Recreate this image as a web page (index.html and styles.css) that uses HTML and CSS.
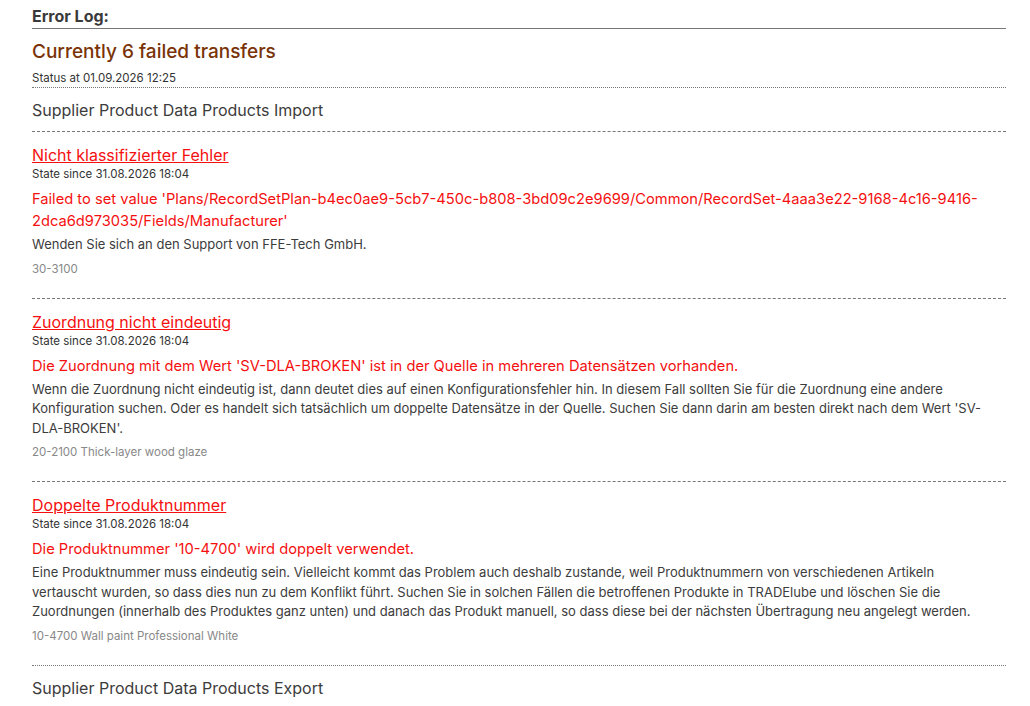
FILE: index.html
```html
<!DOCTYPE html>
<html lang="de">
<head>
<meta charset="utf-8">
<title>Error Log</title>
<link rel="stylesheet" href="styles.css">
</head>
<body>
<div class="page">
  <h2 class="log-head">Error Log:</h2>
  <div class="summary">
    <h1 class="count">Currently 6 failed transfers</h1>
    <div class="status">Status at 01.09.2026 12:25</div>
  </div>
  <section class="group">
    <h3 class="group-title">Supplier Product Data Products Import</h3>
    <div class="entry">
      <a class="err-title" href="#">Nicht klassifizierter Fehler</a>
      <div class="since">State since 31.08.2026 18:04</div>
      <div class="msg">Failed to set value 'Plans/RecordSetPlan-b4ec0ae9-5cb7-450c-b808-3bd09c2e9699/Common/RecordSet-4aaa3e22-9168-4c16-9416-2dca6d973035/Fields/Manufacturer'</div>
      <div class="desc">Wenden Sie sich an den Support von FFE-Tech GmbH.</div>
      <div class="code">30-3100</div>
    </div>
    <div class="entry">
      <a class="err-title" href="#">Zuordnung nicht eindeutig</a>
      <div class="since">State since 31.08.2026 18:04</div>
      <div class="msg">Die Zuordnung mit dem Wert 'SV-DLA-BROKEN' ist in der Quelle in mehreren Datensätzen vorhanden.</div>
      <div class="desc">Wenn die Zuordnung nicht eindeutig ist, dann deutet dies auf einen Konfigurationsfehler hin. In diesem Fall sollten Sie für die Zuordnung eine andere Konfiguration suchen. Oder es handelt sich tatsächlich um doppelte Datensätze in der Quelle. Suchen Sie dann darin am besten direkt nach dem Wert 'SV-DLA-BROKEN'.</div>
      <div class="code">20-2100 Thick-layer wood glaze</div>
    </div>
    <div class="entry last">
      <a class="err-title" href="#">Doppelte Produktnummer</a>
      <div class="since">State since 31.08.2026 18:04</div>
      <div class="msg">Die Produktnummer '10-4700' wird doppelt verwendet.</div>
      <div class="desc">Eine Produktnummer muss eindeutig sein. Vielleicht kommt das Problem auch deshalb zustande, weil Produktnummern von verschiedenen Artikeln vertauscht wurden, so dass dies nun zu dem Konflikt führt. Suchen Sie in solchen Fällen die betroffenen Produkte in TRADElube und löschen Sie die Zuordnungen (innerhalb des Produktes ganz unten) und danach das Produkt manuell, so dass diese bei der nächsten Übertragung neu angelegt werden.</div>
      <div class="code">10-4700 Wall paint Professional White</div>
    </div>
  </section>
  <section class="group">
    <h3 class="group-title">Supplier Product Data Products Export</h3>
  </section>
</div>
</body>
</html>
```

FILE: styles.css
```css
* { box-sizing: border-box; }
html, body { margin: 0; padding: 0; background: #fff; }
body {
  font-family: Inter, "Noto Sans", "Liberation Sans", sans-serif;
  color: #333;
}
.page {
  padding: 6px 24px 0 32px;
}
.log-head {
  margin: 0;
  font-size: 16px;
  font-weight: 700;
  line-height: 20px;
  color: #3a3a3a;
  padding-bottom: 2px;
  border-bottom: 1px solid #777;
}
.summary {
  border-bottom: 1px dotted #777;
  padding-bottom: 2px;
}
.count {
  margin: 10px 0 0;
  font-size: 19px;
  font-weight: 500;
  line-height: 26px;
  color: #7a3306;
}
.status {
  margin-top: 6px;
  font-size: 11.5px;
  line-height: 14px;
  color: #333;
}
.group-title {
  margin: 0;
  font-size: 16px;
  font-weight: 400;
  line-height: 22px;
  color: #3c3c3c;
  padding: 11px 0 10px;
  border-bottom: 1px dashed #777;
}
.entry {
  padding: 12px 12px 21px 0;
  border-bottom: 1px dashed #777;
}
.entry.last {
  border-bottom-style: dotted;
}
.err-title {
  display: block;
  width: fit-content;
  font-size: 16px;
  line-height: 22px;
  color: #f41010;
  text-decoration: underline;
}
.since {
  font-size: 11.5px;
  line-height: 16px;
  color: #333;
}
.msg {
  margin-top: 6px;
  font-size: 14.7px;
  line-height: 22px;
  color: #f41010;
}
.desc {
  margin-top: 3px;
  font-size: 13px;
  line-height: 19.5px;
  color: #3c3c3c;
}
.code {
  margin-top: 6px;
  font-size: 11.5px;
  line-height: 16px;
  color: #888;
}
```
